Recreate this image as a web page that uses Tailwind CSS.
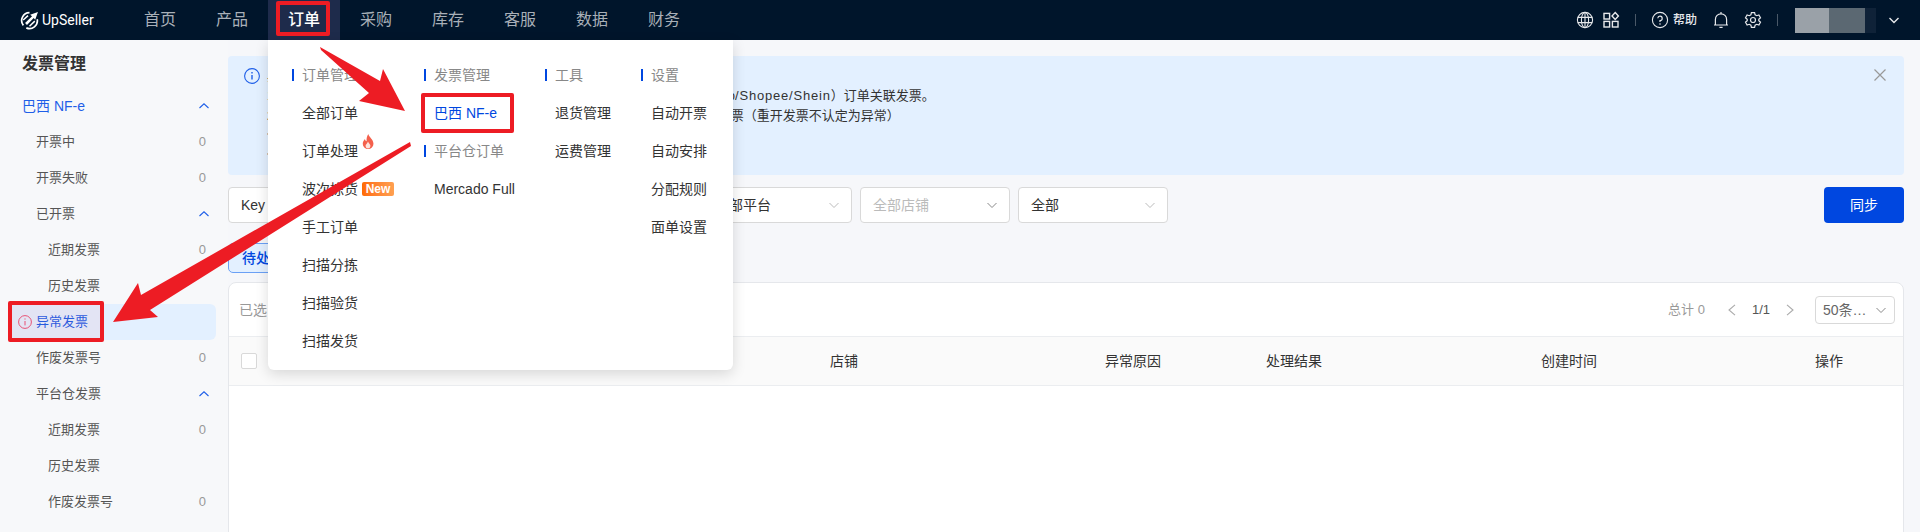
<!DOCTYPE html>
<html lang="zh-CN">
<head>
    <meta charset="UTF-8">
    <meta name="viewport" content="width=device-width, initial-scale=1.0">
    <title>UpSeller 发票管理</title>
    <script src="https://cdn.jsdelivr.net/npm/@tailwindcss/browser@4"></script>
</head>
<body class="relative h-[532px] overflow-hidden bg-[#f6f7fa] font-['Liberation_Sans','Noto_Sans_CJK_SC',sans-serif] text-[#333]">

<!-- top bar -->
<header class="flex h-10 items-center bg-[#00152b] pr-5 text-[#a9b0b8]">
    <div class="flex w-[124px] items-center pl-5">
        <svg class="h-[19px] w-[19px]" viewBox="0 0 18 18" fill="none" stroke="#fff" stroke-width="1.6">
            <path d="M9 1.600A7.400 7.400 0 0 0 3.200 13.600"/>
            <path d="M6 16A7.400 7.400 0 0 0 16.300 7.800"/>
            <path d="M17 1 9.600 3.600 11.400 5 4.800 11.400 6.600 13.200 13 6.600 14.400 8.400Z" fill="#fff" stroke="none"/>
            <path d="M9 14.400 14 9.600M3 8.600 7.600 4.400" stroke-width="1.400"/>
        </svg>
        <span class="ml-[3px] font-['Roboto',sans-serif] text-sm text-white">UpSeller</span>
    </div>
    <nav class="flex text-base">
        <a class="flex h-10 w-[72px] items-center justify-center">首页</a>
        <a class="flex h-10 w-[72px] items-center justify-center">产品</a>
        <a class="flex h-10 w-[72px] items-center justify-center bg-[#1e2b4b] font-medium text-white">订单</a>
        <a class="flex h-10 w-[72px] items-center justify-center">采购</a>
        <a class="flex h-10 w-[72px] items-center justify-center">库存</a>
        <a class="flex h-10 w-[72px] items-center justify-center">客服</a>
        <a class="flex h-10 w-[72px] items-center justify-center">数据</a>
        <a class="flex h-10 w-[72px] items-center justify-center">财务</a>
    </nav>
    <div class="ml-auto flex items-center text-[#e6e8eb]">
        <svg class="h-[18px] w-[18px]" viewBox="0 0 18 18" fill="none" stroke="currentColor" stroke-width="1.1">
            <circle cx="9" cy="9" r="7.600"/>
            <ellipse cx="9" cy="9" rx="3.600" ry="7.600"/>
            <path d="M9 1.400v15.200M1.800 6.400h14.400M1.800 11.600h14.400"/>
        </svg>
        <svg class="ml-2 h-[18px] w-[18px]" viewBox="0 0 18 18" fill="none" stroke="currentColor" stroke-width="1.400">
            <rect x="2" y="2.400" width="5.600" height="5.600"/>
            <rect x="2" y="10.400" width="5.600" height="5.600"/>
            <rect x="10.400" y="10.400" width="5.600" height="5.600"/>
            <path d="M13.200 1.600 16.400 5 13.200 8.400 10 5Z"/>
        </svg>
        <span class="ml-[15px] h-3 w-px bg-[#4a5868]"></span>
        <svg class="ml-[15px] h-[18px] w-[18px]" viewBox="0 0 18 18" fill="none" stroke="currentColor" stroke-width="1.1">
            <circle cx="9" cy="9" r="7.600"/>
            <path d="M6.800 7.200A2.200 2.200 0 1 1 9 9.600v1.400" stroke-width="1.200"/>
            <circle cx="9" cy="13" r=".8" fill="currentColor" stroke="none"/>
        </svg>
        <span class="ml-1 w-6 text-xs font-medium">帮助</span>
        <svg class="ml-[15px] h-[18px] w-[18px]" viewBox="0 0 18 18" fill="none" stroke="currentColor" stroke-width="1.200">
            <path d="M3.400 14V8.400a5.600 5.600 0 0 1 11.200 0V14ZM2 14h14M7.400 16.400h3.200M9 1v1.600"/>
        </svg>
        <svg class="ml-[14px] h-[18px] w-[18px]" viewBox="0 0 18 18" fill="none" stroke="currentColor" stroke-width="1.200">
            <path d="M7.400 1.600h3.200l.5 2.200 1.600.9 2.200-.7 1.600 2.800-1.700 1.500v1.400l1.700 1.500-1.600 2.800-2.200-.7-1.600.9-.5 2.200H7.400l-.5-2.200-1.600-.9-2.200.7-1.600-2.800 1.700-1.500V8.300L1.500 6.800l1.600-2.800 2.200.7 1.600-.9Z"/>
            <circle cx="9" cy="9" r="2.500"/>
        </svg>
        <span class="ml-[15px] h-3 w-px bg-[#4a5868]"></span>
        <div class="ml-[17px] flex h-[25px] w-[81px]">
            <div class="w-[34px] bg-[#9aa1a8]"></div>
            <div class="w-9 bg-[#5b6872]"></div>
            <div class="w-[11px] bg-[#0f2238]"></div>
        </div>
        <svg class="ml-3 h-3 w-3" viewBox="0 0 12 12" fill="none" stroke="currentColor" stroke-width="1.400"><path d="M1.500 4 6 8.400 10.500 4"/></svg>
    </div>
</header>

<div class="flex">
    <!-- sidebar -->
    <aside class="h-[492px] w-[228px] shrink-0 bg-[#f7f8fa] text-[13px] text-[#555]">
        <h2 class="flex h-12 items-center pl-[22px] text-base font-bold text-[#333]">发票管理</h2>
        <div class="flex h-9 items-center justify-between pl-[22px] pr-[19px] text-sm text-[#1f5fe8]">
            <span>巴西 NF-e</span>
            <svg class="h-2.5 w-2.5" viewBox="0 0 10 10" fill="none" stroke="currentColor" stroke-width="1.1"><path d="M.5 7 5 2.800 9.500 7"/></svg>
        </div>
        <div class="flex h-9 items-center justify-between pl-9 pr-[22px]"><span>开票中</span><span class="text-[#999]">0</span></div>
        <div class="flex h-9 items-center justify-between pl-9 pr-[22px]"><span>开票失败</span><span class="text-[#999]">0</span></div>
        <div class="flex h-9 items-center justify-between pl-9 pr-[19px]">
            <span>已开票</span>
            <svg class="h-2.5 w-2.5 text-[#1f5fe8]" viewBox="0 0 10 10" fill="none" stroke="currentColor" stroke-width="1.1"><path d="M.5 7 5 2.800 9.500 7"/></svg>
        </div>
        <div class="flex h-9 items-center justify-between pl-12 pr-[22px]"><span>近期发票</span><span class="text-[#999]">0</span></div>
        <div class="flex h-9 items-center pl-12"><span>历史发票</span></div>
        <div class="ml-2 mr-3 flex h-9 items-center gap-1 rounded-md bg-[#e3f0ff] pl-2.5 text-[#1f5fe8]">
            <svg class="h-3.5 w-3.5" viewBox="0 0 14 14" fill="none" stroke="#e8557a" stroke-width="1">
                <circle cx="7" cy="7" r="6.400"/>
                <path d="M7 6v4.400M7 3.400v1.200"/>
            </svg>
            <span>异常发票</span>
        </div>
        <div class="flex h-9 items-center justify-between pl-9 pr-[22px]"><span>作废发票号</span><span class="text-[#999]">0</span></div>
        <div class="flex h-9 items-center justify-between pl-9 pr-[19px]">
            <span>平台仓发票</span>
            <svg class="h-2.5 w-2.5 text-[#1f5fe8]" viewBox="0 0 10 10" fill="none" stroke="currentColor" stroke-width="1.1"><path d="M.5 7 5 2.800 9.500 7"/></svg>
        </div>
        <div class="flex h-9 items-center justify-between pl-12 pr-[22px]"><span>近期发票</span><span class="text-[#999]">0</span></div>
        <div class="flex h-9 items-center pl-12"><span>历史发票</span></div>
        <div class="flex h-9 items-center justify-between pl-12 pr-[22px]"><span>作废发票号</span><span class="text-[#999]">0</span></div>
    </aside>

    <!-- main -->
    <main class="min-w-0 flex-1 pr-4 pt-4 text-[13px]">
        <div class="flex h-[119px] rounded-[4px] bg-[#e3f0ff] pl-4 pr-[18px] pt-2.5 leading-5">
            <svg class="mt-[2px] h-4 w-4 shrink-0 text-[#1f5fe8]" viewBox="0 0 16 16" fill="none" stroke="currentColor" stroke-width="1.1">
                <circle cx="8" cy="8" r="7.400"/>
                <path d="M8 7v4.600M8 4v1.400" stroke-width="1.400"/>
            </svg>
            <div class="ml-[7px] flex-1">
                <p>异常发票说明</p>
                <p>1. 异常发票是指订单已开票但发票未能成功回传平台的发票，可重新为（Mercado<span class="tracking-[0.8px]">/Shopee/Shein</span>）订单关联发票。</p>
                <p>2.&nbsp;&nbsp; 订单发票被取消、作废或开具失败时，也将进入此页面，请及时处理相关的发票（重开发票不认定为异常）</p>
                <p>请确认后处理</p>
                <p>详情请查看</p>
            </div>
            <svg class="mt-[3px] h-3 w-3 shrink-0" viewBox="0 0 12 12" fill="none" stroke="#999" stroke-width="1.200"><path d="m.5.5 11 11M11.500.5l-11 11"/></svg>
        </div>

        <div class="mt-3 flex gap-2 text-sm">
            <div class="flex h-9 w-[466px] items-center rounded-[4px] border border-[#d9d9d9] bg-white pl-[12px]">Key</div>
            <div class="flex h-9 w-[150px] items-center justify-between rounded-[4px] border border-[#d9d9d9] bg-white pl-3 pr-3">
                <span>全部平台</span>
                <svg class="h-2.5 w-2.5" viewBox="0 0 10 10" fill="none" stroke="#bbb" stroke-width="1"><path d="M.5 3 5 7.500 9.500 3"/></svg>
            </div>
            <div class="flex h-9 w-[150px] items-center justify-between rounded-[4px] border border-[#d9d9d9] bg-white pl-3 pr-3 text-[#bbb]">
                <span>全部店铺</span>
                <svg class="h-2.5 w-2.5" viewBox="0 0 10 10" fill="none" stroke="#888" stroke-width="1"><path d="M.5 3 5 7.500 9.500 3"/></svg>
            </div>
            <div class="flex h-9 w-[150px] items-center justify-between rounded-[4px] border border-[#d9d9d9] bg-white pl-3 pr-3">
                <span>全部</span>
                <svg class="h-2.5 w-2.5" viewBox="0 0 10 10" fill="none" stroke="#bbb" stroke-width="1"><path d="M.5 3 5 7.500 9.500 3"/></svg>
            </div>
            <button class="ml-auto h-9 w-20 rounded-[4px] bg-[#0047e0] text-white">同步</button>
        </div>

        <div class="mt-5 flex h-[30px] w-[90px] items-center rounded-[5px] border border-[#6aa0f5] bg-[#e3f0ff] pl-[13px] text-sm font-medium text-[#0047e0]">待处理 0</div>

        <section class="mt-[9px] h-[300px] rounded-lg border border-[#e5e7eb] bg-white">
            <div class="flex h-[54px] items-center justify-between border-b border-[#ebedf0] pl-[10px] pr-2">
                <span class="text-sm text-[#999]">已选 0</span>
                <div class="flex items-center">
                    <span class="text-[#999]">总计 0</span>
                    <svg class="ml-[22px] h-3 w-2.5" viewBox="0 0 10 12" fill="none" stroke="#aaa" stroke-width="1.1"><path d="M8 .8 2 6l6 5.200"/></svg>
                    <span class="ml-[15px] text-[#555]">1/1</span>
                    <svg class="ml-[15px] h-3 w-2.5" viewBox="0 0 10 12" fill="none" stroke="#aaa" stroke-width="1.1"><path d="m2 .8 6 5.200-6 5.200"/></svg>
                    <div class="ml-5 flex h-7 w-20 items-center justify-between rounded-[4px] border border-[#d9d9d9] pl-[7px] pr-2 text-sm text-[#666]">
                        <span>50条…</span>
                        <svg class="h-2.5 w-2.5" viewBox="0 0 10 10" fill="none" stroke="#888" stroke-width="1"><path d="M.5 3 5 7.500 9.500 3"/></svg>
                    </div>
                </div>
            </div>
            <div class="grid h-[49px] grid-cols-[589px_275px_161px_275px_274px_1fr] items-center border-b border-[#ebedf0] bg-[#fafafa] pl-3 text-sm">
                <span class="h-4 w-4 rounded-[2px] border border-[#d9d9d9] bg-white"></span>
                <span>店铺</span>
                <span>异常原因</span>
                <span>处理结果</span>
                <span>创建时间</span>
                <span>操作</span>
            </div>
        </section>
    </main>
</div>

<!-- orders dropdown -->
<div class="absolute left-[268px] top-10 flex h-[330px] w-[465px] rounded-b-md bg-white pl-6 pt-4 text-sm shadow-[0_4px_14px_rgba(0,0,0,0.14)]">
    <div class="w-[132px]">
        <div class="flex h-[38px] items-center gap-2 text-[#888]"><span class="h-3 w-[2px] bg-[#0047e0]"></span>订单管理</div>
        <div class="flex h-[38px] items-center pl-[10px]">全部订单</div>
        <div class="flex h-[38px] items-center pl-[10px]">
            <span>订单处理</span>
            <svg class="relative -top-[10px] ml-1 h-[15px] w-3" viewBox="0 0 11 14">
                <path d="M5.800 0C6.400 3 10.600 5 10.600 9.200A5 4.800 0 0 1 .6 9.200C.6 7 1.800 5.800 2.600 4.600 3 6 3.600 6.600 4.200 6.800 4 4.200 4.400 2 5.800 0Z" fill="#f4604c"/>
                <path d="M5.500 7C6 8.600 7.800 9.400 7.800 11.200A2.300 2.300 0 0 1 3.200 11.200C3.200 9.600 5 9 5.500 7Z" fill="#fde3dc"/>
            </svg>
        </div>
        <div class="flex h-[38px] items-center pl-[10px]">
            <span>波次拣货</span>
            <span class="ml-1 flex h-[14px] w-8 items-center justify-center rounded-[2px] bg-gradient-to-r from-[#ff6a00] to-[#ffa050] text-xs font-bold text-white">New</span>
        </div>
        <div class="flex h-[38px] items-center pl-[10px]">手工订单</div>
        <div class="flex h-[38px] items-center pl-[10px]">扫描分拣</div>
        <div class="flex h-[38px] items-center pl-[10px]">扫描验货</div>
        <div class="flex h-[38px] items-center pl-[10px]">扫描发货</div>
    </div>
    <div class="w-[121px]">
        <div class="flex h-[38px] items-center gap-2 text-[#888]"><span class="h-3 w-[2px] bg-[#0047e0]"></span>发票管理</div>
        <div class="flex h-[38px] items-center pl-[10px] text-[#0047e0]">巴西 NF-e</div>
        <div class="flex h-[38px] items-center gap-2 text-[#888]"><span class="h-3 w-[2px] bg-[#0047e0]"></span>平台仓订单</div>
        <div class="flex h-[38px] items-center pl-[10px]">Mercado Full</div>
    </div>
    <div class="w-[96px]">
        <div class="flex h-[38px] items-center gap-2 text-[#888]"><span class="h-3 w-[2px] bg-[#0047e0]"></span>工具</div>
        <div class="flex h-[38px] items-center pl-[10px]">退货管理</div>
        <div class="flex h-[38px] items-center pl-[10px]">运费管理</div>
    </div>
    <div>
        <div class="flex h-[38px] items-center gap-2 text-[#888]"><span class="h-3 w-[2px] bg-[#0047e0]"></span>设置</div>
        <div class="flex h-[38px] items-center pl-[10px]">自动开票</div>
        <div class="flex h-[38px] items-center pl-[10px]">自动安排</div>
        <div class="flex h-[38px] items-center pl-[10px]">分配规则</div>
        <div class="flex h-[38px] items-center pl-[10px]">面单设置</div>
    </div>
</div>

<!-- red annotations drawn over the page -->
<div class="absolute left-[276px] top-[1px] h-[35px] w-[54px] rounded-[2px] border-4 border-[#ed1c24]"></div>
<div class="absolute left-[421px] top-[93px] h-10 w-[93px] rounded-[2px] border-4 border-[#ed1c24]"></div>
<div class="absolute left-2 top-[301px] h-[41px] w-24 rounded-[2px] border-4 border-[#ed1c24] bg-[#ed1c24]/5"></div>
<svg class="absolute left-0 top-0 h-[532px] w-[1920px]" viewBox="0 0 1920 532" fill="#ed1c24">
    <path d="M320 47 380 81 383 69 405 111 359 101 369 93 321 50Z"/>
    <path d="M410 142 141 295 138 283 113 322 158 317 150 310 411 146Z"/>
</svg>

</body>
</html>
